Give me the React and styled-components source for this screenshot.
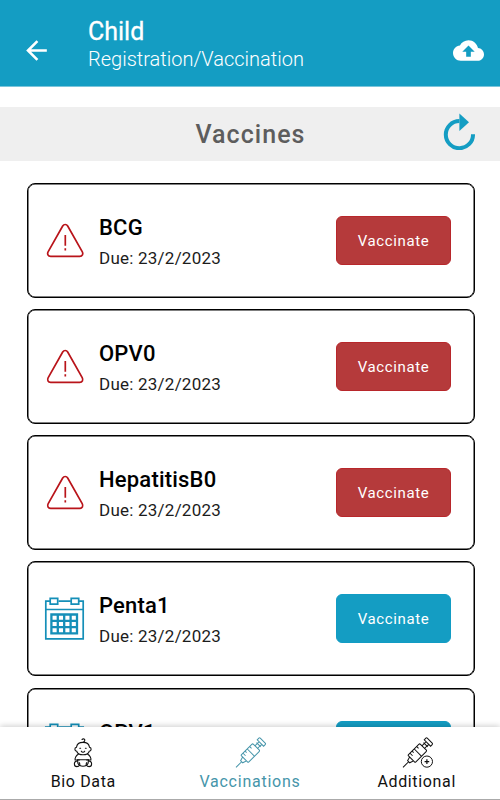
import React from 'react';
import styled, { createGlobalStyle } from 'styled-components';

const GlobalStyle = createGlobalStyle`
  * {
    box-sizing: border-box;
  }

  body {
    margin: 0;
    background: #fff;
    font-family: Roboto, 'Liberation Sans', sans-serif;
  }

  svg {
    display: block;
    flex: none;
  }
`;

const Screen = styled.div`
  display: flex;
  flex-direction: column;
  height: 100vh;
  overflow: hidden;
`;

const Header = styled.header`
  display: flex;
  flex: none;
  align-items: center;
  height: 87px;
  padding: 14px 16px 0 21px;
  background: #149dc3;
  border-bottom: 1px solid #7bc5db;
  color: #fff;
`;

const HeaderText = styled.div`
  flex: 1;
  margin: -12px 0 0 36px;
`;

const HeaderTitle = styled.h1`
  margin: 0;
  font-size: 25px;
  font-weight: 400;
  line-height: 30px;
  -webkit-text-stroke: 0.3px #fff;
`;

const HeaderSubtitle = styled.p`
  margin: 0;
  font-size: 20px;
  font-weight: 300;
  line-height: 25px;
`;

const IconButton = styled.button`
  padding: 0;
  border: 0;
  background: none;
  color: inherit;
`;

const SectionBar = styled.div`
  display: grid;
  flex: none;
  grid-template-columns: 1fr auto 1fr;
  align-items: center;
  height: 54px;
  margin-top: 20px;
  padding: 0 25px;
  background: #efefef;
  color: #149dc3;

  ${IconButton} {
    justify-self: end;
    margin: 0 0 7px;
  }
`;

const SectionTitle = styled.h2`
  grid-column: 2;
  margin: 0;
  padding-left: 1px;
  color: #5d5d5d;
  font-size: 25px;
  font-weight: 500;
  letter-spacing: 1.05px;
`;

const List = styled.div`
  display: flex;
  flex: 1;
  flex-direction: column;
  gap: 11.13px;
  min-height: 0;
  padding: 22px 25px 0 27px;
  overflow: hidden;
`;

const Card = styled.article`
  display: flex;
  flex: none;
  align-items: center;
  height: 115px;
  padding: 0 23px 0 15px;
  border: 1px solid #000;
  border-radius: 8px;
  box-shadow: inset 0 0 0 0.5px #000;
`;

const CardText = styled.div`
  flex: 1;
  margin: 5px 0 0 12px;
  color: #000;
`;

const VaccineName = styled.h3`
  margin: 0;
  font-size: 22px;
  font-weight: 500;
  line-height: 28px;
  letter-spacing: 0.2px;
`;

const DueDate = styled.p`
  margin: 2px 0 0;
  color: #1c1c1c;
  font-size: 17px;
  line-height: 28px;
  letter-spacing: 0.23px;
`;

const VaccinateButton = styled.button`
  width: 115px;
  height: 49px;
  padding: 0;
  border: 1px solid ${({ $overdue }) => ($overdue ? '#b8272b' : '#129cc4')};
  border-radius: 6px;
  background: ${({ $overdue }) => ($overdue ? '#b53a3b' : '#149dc3')};
  color: #fff;
  font-family: inherit;
  font-size: 15px;
  letter-spacing: 0.6px;
`;

const TabBar = styled.nav`
  position: relative;
  display: grid;
  flex: none;
  grid-template-columns: repeat(3, 1fr);
  height: 73px;
  background: #fff;
  border-bottom: 1px solid #aaa;
  box-shadow: 0 -1px 6px rgba(0, 0, 0, 0.2);
`;

const Tab = styled.a`
  display: flex;
  flex-direction: column;
  align-items: center;
  padding-top: 9px;
  color: ${({ $active }) => ($active ? '#4695aa' : '#111')};
  font-size: 16px;
  line-height: 23px;
  letter-spacing: ${({ $active }) => ($active ? 0.75 : 0.65)}px;
`;

const ArrowIcon = () => (
  <svg width="31" height="31" viewBox="0 0 24 24" fill="currentColor">
    <path d="M20 11H7.83l5.59-5.59L12 4l-8 8 8 8 1.41-1.41L7.83 13H20v-2z" />
  </svg>
);

const CloudIcon = () => (
  <svg width="31" height="31" viewBox="0 0 24 24" fill="currentColor">
    <path d="M19.35 10.04C18.67 6.59 15.64 4 12 4 9.11 4 6.6 5.64 5.35 8.04 2.34 8.36 0 10.91 0 14c0 3.31 2.69 6 6 6h13c2.76 0 5-2.24 5-5 0-2.64-2.05-4.78-4.65-4.96zM13.8 12.9v4h-3.6v-4H7.2L12 8.1l4.8 4.8h-3z" />
  </svg>
);

const ReloadIcon = () => (
  <svg width="32" height="38" viewBox="0 0 32 38">
    <path d="M16.4 9a13.6 13.6 0 1 0 13.6 13.2" fill="none" stroke="currentColor" strokeWidth="4" />
    <path d="M16.4 1.5 26 10.3 16.4 19z" fill="currentColor" />
  </svg>
);

const WarningIcon = () => (
  <svg width="44" height="44" viewBox="0 0 44 44" fill="none" stroke="#b9141a" strokeWidth="1.7">
    <path d="M19.7 7 5.2 32.6c-1.3 2.4-.2 4.8 2.5 4.8h29c2.7 0 3.8-2.4 2.5-4.8L24.7 7c-1.2-2-3.8-2-5 0z" />
    <path d="M22.3 16v10.8M22.3 29.2v2.2" />
  </svg>
);

const CalendarIcon = () => (
  <svg width="44" height="44" viewBox="0 0 44 44" fill="none" stroke="#158fb8" strokeWidth="1.7">
    <path d="M7.2 4.2H2.8v37.6h37.4V4.2h-4.5M15.5 4.2h12.3M2.8 12.5h37.4" />
    <path d="M7.2 1.3h7.5v5.9H7.2zM28.2 1.3h7.5v5.9h-7.5z" />
    <path d="M8.4 17.5H34v18.9H8.4zM8.4 23.8H34M8.4 30.1H34M14.8 17.5v18.9M21.2 17.5v18.9M27.6 17.5v18.9" strokeWidth="2.3" />
  </svg>
);

const BabyIcon = () => (
  <svg width="34" height="34" viewBox="0 0 34 34" fill="none" stroke="currentColor" strokeWidth="1.1" strokeLinecap="round">
    <path d="M16 3.5c1.5-1.3 3.3-.2 2.7 1.3-.3.8-1 1-1.4 1.4" />
    <path d="M10.5 11.3c.8-6.6 12.2-6.6 13 0 2.2.3 2.2 3.5-.2 3.9-1.7 4.8-10.9 4.8-12.6 0-2.4-.4-2.4-3.6-.2-3.9z" />
    <path d="M13.8 12.3h.8M19.4 12.3h.8M15.3 15.2c.8 1.3 2.6 1.3 3.4 0" />
    <path d="M12.3 18.2c-2 1-3.6 3.8-3.2 5.8h4.2M21.7 18.2c2 1 3.6 3.8 3.2 5.8h-4.2" />
    <path d="M11.5 23.8h11l-.4 3.5c-1.8 4-8.4 4-10.2 0z" />
    <path d="M11 25c-3.5.4-3.4 5.5-.1 5.6 2.5 0 3.7-2.2 2.3-4M23 25c3.5.4 3.4 5.5.1 5.6-2.5 0-3.7-2.2-2.3-4" />
  </svg>
);

const SyringeIcon = ({ badge = false }) => (
  <svg width="34" height="34" viewBox="0 0 34 34" fill="none" stroke="currentColor" strokeWidth="1">
    <g transform="translate(3 31.4) rotate(-45)">
      <path d="M0 0h8M8-1.5l4-1.2v5.4L8 1.5zM12-4.2q0-1 1-1h14.5q1.2 0 1.2 1.2v8q0 1.2-1.2 1.2H13q-1 0-1-1z" />
      <path d="M21-5v10M15-5v3.5M18-5v2M24.5-5v2.5M28.5-1.8h6M28.5 1.8h6M32-3v6M34.5-4.5h2.3q1 0 1 1v7q0 1-1 1h-2.3z" />
    </g>
    {badge && (
      <>
        <circle cx="26.9" cy="25.6" r="5.6" fill="#fff" />
        <path d="M26.9 23.3v4.6M24.6 25.6h4.6" strokeWidth="1.2" />
      </>
    )}
  </svg>
);

const vaccines = [
  { name: 'BCG', due: '23/2/2023', overdue: true },
  { name: 'OPV0', due: '23/2/2023', overdue: true },
  { name: 'HepatitisB0', due: '23/2/2023', overdue: true },
  { name: 'Penta1', due: '23/2/2023', overdue: false },
  { name: 'OPV1', due: '23/2/2023', overdue: false },
];

function VaccineCard({ name, due, overdue }) {
  return (
    <Card>
      {overdue ? <WarningIcon /> : <CalendarIcon />}
      <CardText>
        <VaccineName>{name}</VaccineName>
        <DueDate>Due: {due}</DueDate>
      </CardText>
      <VaccinateButton $overdue={overdue}>Vaccinate</VaccinateButton>
    </Card>
  );
}

function App() {
  return (
    <Screen>
      <GlobalStyle />
      <Header>
        <IconButton aria-label="Back">
          <ArrowIcon />
        </IconButton>
        <HeaderText>
          <HeaderTitle>Child</HeaderTitle>
          <HeaderSubtitle>Registration/Vaccination</HeaderSubtitle>
        </HeaderText>
        <IconButton aria-label="Upload">
          <CloudIcon />
        </IconButton>
      </Header>
      <SectionBar>
        <SectionTitle>Vaccines</SectionTitle>
        <IconButton aria-label="Reload">
          <ReloadIcon />
        </IconButton>
      </SectionBar>
      <List>
        {vaccines.map(vaccine => (
          <VaccineCard key={vaccine.name} {...vaccine} />
        ))}
      </List>
      <TabBar>
        <Tab>
          <BabyIcon />
          Bio Data
        </Tab>
        <Tab $active>
          <SyringeIcon />
          Vaccinations
        </Tab>
        <Tab>
          <SyringeIcon badge />
          Additional
        </Tab>
      </TabBar>
    </Screen>
  );
}

export default App;
